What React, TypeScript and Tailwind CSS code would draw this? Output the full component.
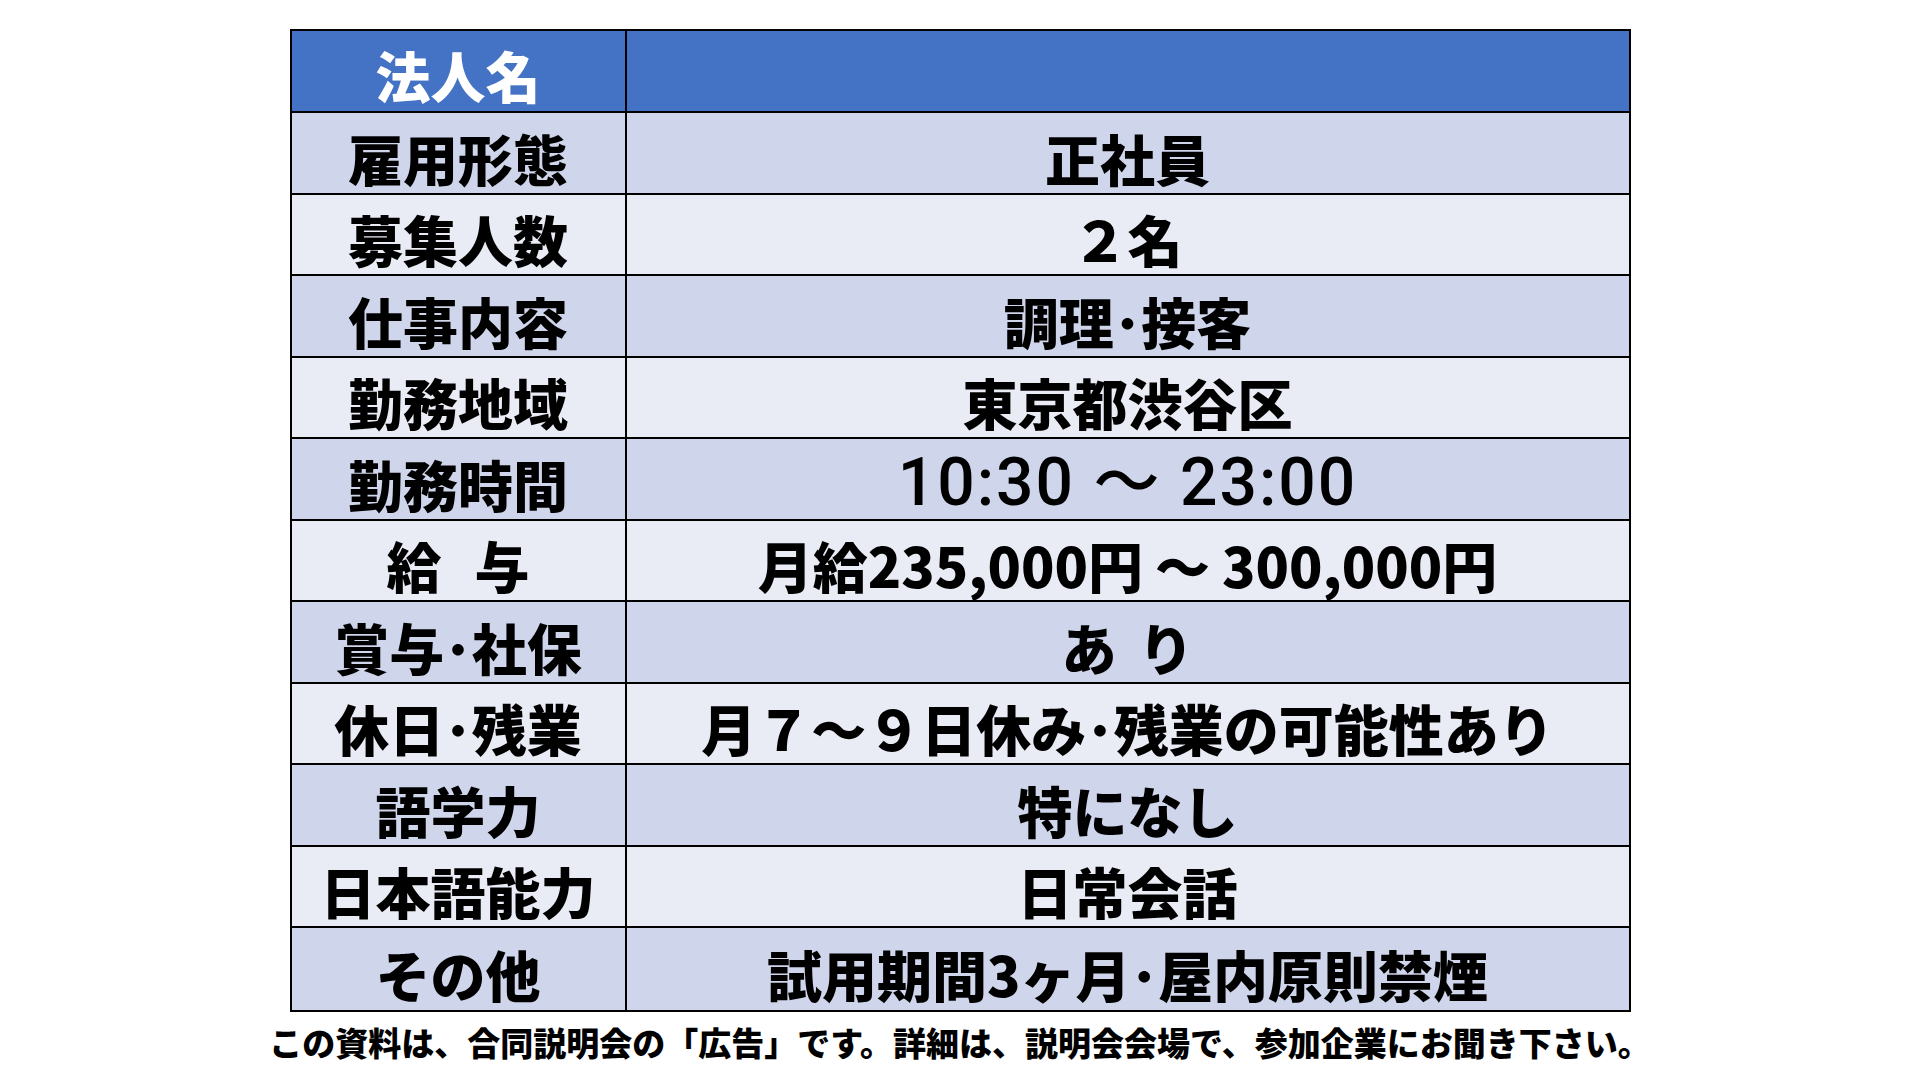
import type { ReactNode } from 'react';

const Gap = ({ w }: { w: string }) => <span className={`inline-block ${w}`} />;

const rows: { label: ReactNode; value: ReactNode; latin?: boolean }[] = [
  { label: '雇用形態', value: '正社員' },
  { label: '募集人数', value: '２名' },
  { label: '仕事内容', value: '調理･接客' },
  { label: '勤務地域', value: '東京都渋谷区' },
  { label: '勤務時間', value: '10:30 ～ 23:00', latin: true },
  { label: <>給<Gap w="w-[33px]" />与</>, value: <>月給235,000円<Gap w="w-[12px]" />～<Gap w="w-[12px]" />300,000円</> },
  { label: '賞与･社保', value: <>あ<Gap w="w-[22px]" />り</> },
  { label: '休日･残業', value: '月７～９日休み･残業の可能性あり' },
  { label: '語学力', value: '特になし' },
  { label: '日本語能力', value: '日常会話' },
  { label: 'その他', value: '試用期間3ヶ月･屋内原則禁煙' },
];

const jp = "font-['Noto_Sans_CJK_JP','Noto_Sans',sans-serif]";

export default function App() {
  return (
    <div className={`w-[1920px] h-[1080px] bg-white flex flex-col items-center pt-[29px] ${jp}`}>
      <div className="w-[1341px] border-2 border-black flex flex-col">
        <div className="flex h-[82px] bg-[#4472C4] border-b-2 border-black">
          <div className="w-[335px] border-r-2 border-black flex items-center justify-center pt-[6px] text-white text-[55px] font-black leading-none">
            法人名
          </div>
          <div className="flex-1" />
        </div>
        {rows.map((r, i) => (
          <div
            key={i}
            className={`flex h-[81.5px] ${i === rows.length - 1 ? '' : 'border-b-2 border-black'} ${
              i % 2 === 0 ? 'bg-[#CFD5EA]' : 'bg-[#E9EBF5]'
            }`}
          >
            <div className="w-[335px] border-r-2 border-black flex items-center justify-center pt-[9px] text-black text-[55px] font-black leading-none whitespace-nowrap">
              {r.label}
            </div>
            <div
              className={`flex-1 flex items-center justify-center pt-[9px] text-black leading-none whitespace-nowrap ${
                r.latin
                  ? "font-['Roboto','Liberation_Sans','Noto_Sans_CJK_JP',sans-serif] text-[66px] font-medium tracking-[2px]"
                  : 'text-[55px] font-black'
              }`}
            >
              {r.value}
            </div>
          </div>
        ))}
      </div>
      <div className="mt-[14px] text-[33px] font-black leading-none text-black whitespace-nowrap">
        この資料は、合同説明会の「広告」です。詳細は、説明会会場で、参加企業にお聞き下さい。
      </div>
    </div>
  );
}
